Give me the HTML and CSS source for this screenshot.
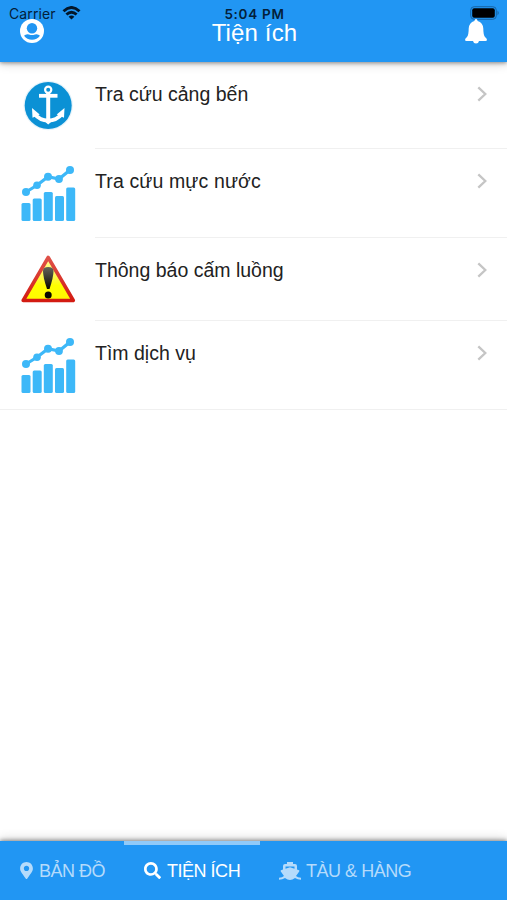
FILE: index.html
```html
<!DOCTYPE html>
<html lang="vi">
<head>
<meta charset="utf-8">
<title>Tiện ích</title>
<link rel="stylesheet" href="styles.css">
</head>
<body>
<svg class="defs" width="0" height="0">
  <symbol id="chart" viewBox="0 0 56 58">
    <g fill="#3db8f8">
      <rect x="0.5" y="38" width="9" height="18" rx="1.5"/><rect x="11.7" y="33.5" width="9" height="22.5" rx="1.5"/><rect x="22.8" y="27" width="9" height="29" rx="1.5"/><rect x="34" y="31" width="9" height="25" rx="1.5"/><rect x="45.2" y="22.500" width="9" height="33.500" rx="1.500"/>
      <circle cx="5" cy="27" r="4"/><circle cx="16" cy="20.300" r="3.800"/><circle cx="27" cy="11.700" r="4"/><circle cx="38" cy="14" r="3.900"/><circle cx="49" cy="5" r="4"/>
    </g>
    <path d="M5 27 16 20.300 27 11.700 38 14 49 5" fill="none" stroke="#3db8f8" stroke-width="3.200"/>
  </symbol>
  <symbol id="chevron" viewBox="0 0 10 16"><path d="M1.300 1.300 8.300 8 1.300 14.700" fill="none" stroke="#c5c5c5" stroke-width="2.300"/></symbol>
</svg>
<div class="app">
  <header class="header">
    <div class="status">
      <div class="carrier"><span>Carrier</span>
        <svg width="19" height="14" viewBox="0 0 18 14" fill="none" stroke="#03172a" stroke-width="2.900"><path d="M1 5.200Q9-2.200 17 5.200M3.900 8.500Q9 3.900 14.100 8.500"/><path d="M6.100 10.700Q9 8.300 11.900 10.700L9 13.600Z" fill="#03172a" stroke="none"/></svg>
      </div>
      <span class="clock">5:04 PM</span>
      <svg class="battery" width="30" height="14" viewBox="0 0 30 14"><rect x=".7" y=".7" width="25.600" height="12.600" rx="3.500" fill="none" stroke="#1765a5"/><rect x="2.200" y="2.200" width="22.600" height="9.600" rx="2" fill="#000"/><path d="M27.500 4.600q2.500 2.400 0 4.800z" fill="#1765a5"/></svg>
    </div>
    <div class="toolbar">
      <svg class="user" width="24" height="24" viewBox="0 0 24 24"><circle cx="12" cy="12" r="12" fill="#fff"/><circle cx="12" cy="9.300" r="5.200" fill="#2196f3"/><path d="M4 16.800Q6 14.700 9 15.500Q12 16.600 15 15.500Q18 14.700 20 16.800Q17 20.800 12 20.800T4 16.800Z" fill="#2196f3"/></svg>
      <h1 class="title">Tiện ích</h1>
      <svg class="bell" width="22" height="25" viewBox="0 0 22 25"><path fill="#fff" d="M11 0Q12.400 0 12.600 2Q18 3.700 18.300 9.500Q18.300 16 20 18Q22 19.500 22 21Q21.800 22 20.500 22H14Q13.500 24.500 11 24.500T8 22H1.500Q.2 22 0 21Q0 19.500 2 18Q3.700 16 3.700 9.500Q4 3.700 9.400 2Q9.600 0 11 0Z"/></svg>
    </div>
  </header>
  <main class="list">
    <div class="row port">
      <svg class="icon" width="56" height="58" viewBox="0 0 56 58"><circle cx="27.200" cy="27.500" r="24.700" fill="#e5f3fa"/><circle cx="27.200" cy="27.500" r="23.500" fill="#0b91d5"/><g stroke="#fff" fill="none"><circle cx="27.200" cy="11.700" r="3.100" stroke-width="2.200"/><path d="M27.200 15V44" stroke-width="4"/><path d="M18 17.800H36.500" stroke-width="3.800"/><path d="M13.500 36Q19 42.500 27.200 42.700Q35.500 42.500 41 36" stroke-width="3.800"/></g><path fill="#fff" d="M11 30 18.700 36.500 11.500 39.700ZM43.500 30 35.700 36.500 43 39.700ZM22 42H32.500L27.200 46.500Z"/></svg>
      <div class="content"><span class="label">Tra cứu cảng bến</span><svg class="chev" width="10" height="16"><use href="#chevron"/></svg></div>
    </div>
    <div class="row level">
      <svg class="icon" width="56" height="58"><use href="#chart"/></svg>
      <div class="content"><span class="label wide">Tra cứu mực nước</span><svg class="chev" width="10" height="16"><use href="#chevron"/></svg></div>
    </div>
    <div class="row notice">
      <svg class="icon" width="56" height="58" viewBox="0 0 56 58"><defs><linearGradient id="yellow" x1="0" y1="0" x2="0" y2="1"><stop offset="0" stop-color="#ffff9c"/><stop offset=".45" stop-color="#fff64d"/><stop offset=".65" stop-color="#ffff00"/><stop offset="1" stop-color="#fff900"/></linearGradient><linearGradient id="mark" x1="0" y1="0" x2="0" y2="1"><stop offset="0" stop-color="#66635a"/><stop offset="1" stop-color="#090900"/></linearGradient><linearGradient id="red" x1="0" y1="0" x2="0" y2="1"><stop offset="0" stop-color="#df5148"/><stop offset="1" stop-color="#d31b12"/></linearGradient></defs><path d="M27.200 3.500 52.300 46.500H2.200Z" fill="url(#yellow)" stroke="url(#red)" stroke-width="3.600" stroke-linejoin="round"/><path d="M22 17Q22 13 27.200 13T32.500 17Q32.500 23 28.500 35H26Q22 23 22 17Z" fill="url(#mark)"/><circle cx="27.200" cy="41" r="3.500" fill="#080800"/></svg>
      <div class="content"><span class="label">Thông báo cấm luồng</span><svg class="chev" width="10" height="16"><use href="#chevron"/></svg></div>
    </div>
    <div class="row service">
      <svg class="icon" width="56" height="58"><use href="#chart"/></svg>
      <div class="content"><span class="label">Tìm dịch vụ</span><svg class="chev" width="10" height="16"><use href="#chevron"/></svg></div>
    </div>
  </main>
  <nav class="tabs">
    <a class="tab map"><svg width="13" height="17" viewBox="0 0 384 512"><path fill="currentColor" d="M172.268 501.670C26.970 291.031 0 269.413 0 192 0 85.961 85.961 0 192 0s192 85.961 192 192c0 77.413-26.970 99.031-172.268 309.670-9.535 13.774-29.930 13.773-39.464 0zM192 272c44.183 0 80-35.817 80-80s-35.817-80-80-80-80 35.817-80 80 35.817 80 80 80z"/></svg><span>BẢN ĐỒ</span></a>
    <a class="tab utility active"><svg width="17" height="17" viewBox="0 0 512 512"><path fill="currentColor" d="M505 442.700L405.300 343c-4.500-4.500-10.600-7-17-7H372c27.600-35.300 44-79.700 44-128C416 93.100 322.900 0 208 0S0 93.100 0 208s93.100 208 208 208c48.300 0 92.700-16.400 128-44v16.300c0 6.400 2.500 12.500 7 17l99.700 99.700c9.400 9.400 24.600 9.400 33.900 0l28.300-28.300c9.400-9.400 9.400-24.600.1-34zM208 336c-70.700 0-128-57.200-128-128 0-70.700 57.200-128 128-128 70.700 0 128 57.200 128 128 0 70.700-57.200 128-128 128z"/></svg><span>TIỆN ÍCH</span></a>
    <a class="tab ship"><svg width="22" height="18" viewBox="0 0 22 18"><path fill="currentColor" d="M8 0H14V2H16Q18 2 18 4V7.500L20 8.200Q20.800 8.600 20.200 9.400L17 14Q18.700 15.500 22 15.700V17.800Q18.500 17.800 16 16Q13.500 18 11 18T6 16Q3.500 17.800 0 17.800V15.700Q3.300 15.500 5 14L1.800 9.400Q1.200 8.600 2 8.200L4 7.500V4Q4 2 6 2H8ZM6.500 4.500V6.700L11 5.200 15.500 6.700V4.500Z"/></svg><span>TÀU &amp; HÀNG</span></a>
  </nav>
</div>
</body>
</html>
```
FILE: styles.css
```css
* { box-sizing: border-box; }
body { margin: 0; background: #fff; font-family: "Liberation Sans", Arial, sans-serif; color: #222; }
.defs { position: absolute; }
.app { height: 900px; display: flex; flex-direction: column; overflow: hidden; }
.header { position: relative; height: 62px; flex: none; background: #2196f3; box-shadow: 0 1px 4px rgba(0,0,0,.4), 0 2px 10px rgba(0,0,0,.16); }
.status { height: 19px; padding: 6px 7px 0 9px; display: grid; grid-template-columns: 1fr auto 1fr; color: #03203a; }
.carrier { display: flex; align-items: flex-start; gap: 6px; font: 14px/16px Inter, sans-serif; }
.carrier span { letter-spacing: .1px; }
.clock { font: 600 13.5px/16px Inter, sans-serif; letter-spacing: .7px; }
.battery { justify-self: end; }
.toolbar { display: grid; grid-template-columns: 1fr auto 1fr; padding: 0 20px; }
.title { margin: 0 -1px 0 1px; color: #fff; font-size: 24px; font-weight: 400; line-height: 27px; letter-spacing: .15px; white-space: nowrap; }
.bell { justify-self: end; }
.list { flex: 1; padding-top: 7px; }
.row { display: flex; padding-left: 21px; height: 83px; }
.port { height: 80px; }
.level { height: 89px; }
.service { height: 89px; border-bottom: 1px solid #f0f0f0; }
.icon { flex: none; margin-top: 16px; }
.port .icon { margin-top: 9px; }
.content { flex: 1; margin-left: 18px; padding: 20px 20px 0 0; display: flex; align-items: flex-start; justify-content: space-between; border-bottom: 1px solid #f0f0f0; }
.port .content { padding-top: 13px; }
.service .content { border: 0; }
.label { font-size: 19.5px; line-height: 24px; white-space: nowrap; }
.wide { letter-spacing: .12px; }
.chev { margin-top: 4px; }
.tabs { position: relative; flex: none; height: 59px; background: #2196f3; display: flex; box-shadow: 0 -1px 4px rgba(0,0,0,.4), 0 -2px 10px rgba(0,0,0,.16); }
.tab { display: flex; align-items: flex-start; padding-top: 21px; color: #b5dbfb; font-size: 18px; line-height: 18px; letter-spacing: -.48px; white-space: nowrap; border-top: 0 solid #90caf9; }
.map { width: 124px; padding-left: 20px; gap: 6px; }
.utility { width: 136px; padding-left: 20px; gap: 6px; }
.ship { padding-left: 19px; gap: 5px; }
.active { color: #fff; border-top-width: 4px; padding-top: 17px; }
```
